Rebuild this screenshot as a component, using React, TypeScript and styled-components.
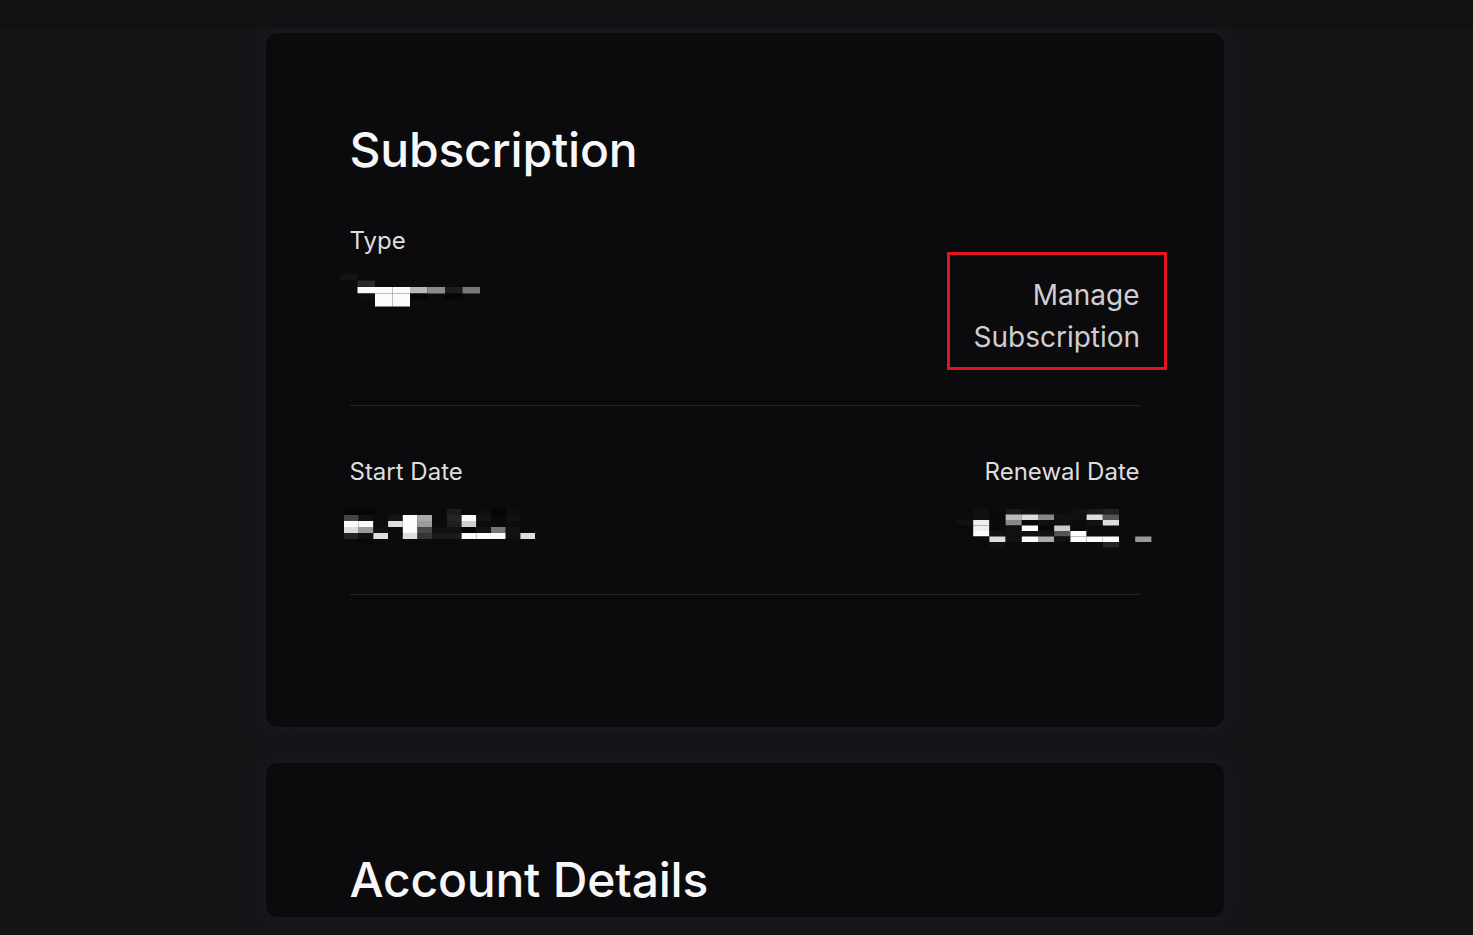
import React from 'react';
import styled, { createGlobalStyle } from 'styled-components';

const GlobalStyle = createGlobalStyle`
  html, body {
    margin: 0;
    padding: 0;
    background: #151417;
    font-family: Inter, "Noto Sans", "Liberation Sans", sans-serif;
    -webkit-font-smoothing: antialiased;
  }
`;

const TopBar = styled.div`
  height: 28px;
  background: #111013;
`;

const Main = styled.main`
  display: flex;
  flex-direction: column;
  align-items: center;
  gap: 36px;
  padding: 5px 0 0 16px;
  height: 907px;
  overflow: hidden;
`;

const Card = styled.section<{ $height?: number }>`
  width: 958px;
  box-sizing: border-box;
  padding: 80px 84px 0;
  background: #0b0a0d;
  border-radius: 12px;
  box-shadow: 0 0 22px 6px rgba(30, 29, 34, 0.7);
  flex-shrink: 0;
  ${(p) => (p.$height ? `height: ${p.$height}px;` : '')}
`;

const Title = styled.h2`
  margin: 0;
  font-size: 48px;
  line-height: 74px;
  font-weight: 500;
  color: #f7f7f8;
  letter-spacing: -0.2px;
`;

const Row = styled.div<{ $pad: string }>`
  display: flex;
  justify-content: space-between;
  align-items: flex-start;
  padding: ${(p) => p.$pad};
  border-bottom: 1px solid #262529;
`;

const Field = styled.div<{ $align?: 'left' | 'right' }>`
  display: flex;
  flex-direction: column;
  align-items: ${(p) => (p.$align === 'right' ? 'flex-end' : 'flex-start')};
`;

const Label = styled.div`
  font-size: 24px;
  line-height: 28px;
  color: #dedede;
  font-weight: 400;
`;

const Value = styled.div<{ $shift: number; $mt: number }>`
  margin-top: ${(p) => p.$mt}px;
  display: flex;
  transform: translateX(${(p) => p.$shift}px);
`;

const ManageButton = styled.button`
  width: 220px;
  margin: 25px -27px 0 0;
  padding: 19px 24px 9px;
  background: transparent;
  border: 3px solid #e3141f;
  color: #cfcfd1;
  font-family: inherit;
  font-size: 28px;
  line-height: 42px;
  font-weight: 400;
  text-align: right;
  cursor: pointer;
`;

// pixelated (censored) values, each cell is one grey tone
type Grid = string[][];

const Mosaic = ({ grid, cw, ch }: { grid: Grid; cw: number; ch: number }) => {
  const cols = Math.max(...grid.map((r) => r.length));
  return (
    <svg width={cols * cw} height={grid.length * ch} viewBox={`0 0 ${cols * cw} ${grid.length * ch}`}>
      {grid.map((row, y) =>
        row.map((c, x) =>
          c ? <rect key={`${x}-${y}`} x={x * cw} y={y * ch} width={cw} height={ch} fill={c} /> : null,
        ),
      )}
    </svg>
  );
};

const W = '#fbfafc';
const typeGrid: Grid = [
  ['#131215', '', '', '', '', '', '', '', ''],
  ['', '#2a2a2c', '', '#0c0c0e', '', '', '', '', ''],
  ['', W, W, W, '#b8b8ba', '#8a8a8c', '#1d1d1f', '#787879', ''],
  ['', '#0e0e10', W, W, '#050506', '', '#050506', '', ''],
  ['', '', W, W, '', '', '', '', ''],
];

const startGrid: Grid = [
  ['#060607', '#060607', '#0a0a0b', '#0c0c0d', '#0d0d0e', '#0b0b0c', '#0a0a0b', '#1c1c1e', '#0c0c0d', '#0e0e0f', '#050506', '#0e0e0f', ''],
  ['#454547', '#111113', '#0c0c0d', '#141416', W, '#a9a9ab', '#0b0b0c', '#242426', W, '#131315', '#09090a', '#111113', ''],
  [W, W, '#0d0d0e', '#dededf', W, '#9a9a9c', '#0b0b0c', '#1f1f21', '#cfcfd0', '#0b0b0c', '#0a0a0b', '#0c0c0d', ''],
  ['#dcdcdd', '#9b9b9d', '#111113', '#0b0b0c', W, '#474749', '#111113', '#111113', '#050506', '#111113', '#777779', '#111113', ''],
  ['#232325', '#111113', '#dededf', '#0b0b0c', '#dededf', '#353537', '#1a1a1c', '#1a1a1c', W, W, W, '#111113', '#dededf'],
  ['', '#080809', '', '', '', '', '', '', '', '', '', '', ''],
];

const renewGrid: Grid = [
  ['', '#111113', '#0a0a0b', '#1a1a1c', '#111113', '', '', '#111113', '#1a1a1c', '#232325', '', '', ''],
  ['', '#111113', '#0a0a0b', '#bbbbbd', '#dddddf', '#888889', '#111113', '#111113', '#dddddf', '#555557', '', '', ''],
  ['#111113', '#eeeeef', '#0a0a0b', '#888889', '#0a0a0b', '#111113', '#111113', '', '#111113', '#dddddf', '', '', ''],
  ['#0a0a0b', '#eeeeef', '#0a0a0b', '#111113', W, '#0a0a0b', '#cccccd', '#0a0a0b', '', '', '', '', ''],
  ['', W, '#111113', '#111113', '#111113', '#111113', '#555557', W, '#0a0a0b', '', '', '', ''],
  ['', '#0a0a0b', '#dddddf', '#111113', W, '#aaaaab', '#111113', W, W, W, '#0a0a0b', '#999999', ''],
  ['', '', '#111113', '', '', '', '', '', '', '#232325', '', '', ''],
];

export default function App() {
  return (
    <>
      <GlobalStyle />
      <TopBar />
      <Main>
        <Card $height={694}>
          <Title>Subscription</Title>
          <Row $pad="40px 0 35px">
            <Field>
              <Label>Type</Label>
              <Value $shift={-10} $mt={19}>
                <Mosaic grid={typeGrid} cw={17.5} ch={6.5} />
              </Value>
            </Field>
            <ManageButton>Manage Subscription</ManageButton>
          </Row>
          <Row $pad="52px 0 46px">
            <Field>
              <Label>Start Date</Label>
              <Value $shift={-6} $mt={23}>
                <Mosaic grid={startGrid} cw={14.7} ch={6} />
              </Value>
            </Field>
            <Field $align="right">
              <Label>Renewal Date</Label>
              <Value $shift={28} $mt={23}>
                <Mosaic grid={renewGrid} cw={16.2} ch={5.5} />
              </Value>
            </Field>
          </Row>
        </Card>
        <Card>
          <Title>Account Details</Title>
        </Card>
      </Main>
    </>
  );
}
